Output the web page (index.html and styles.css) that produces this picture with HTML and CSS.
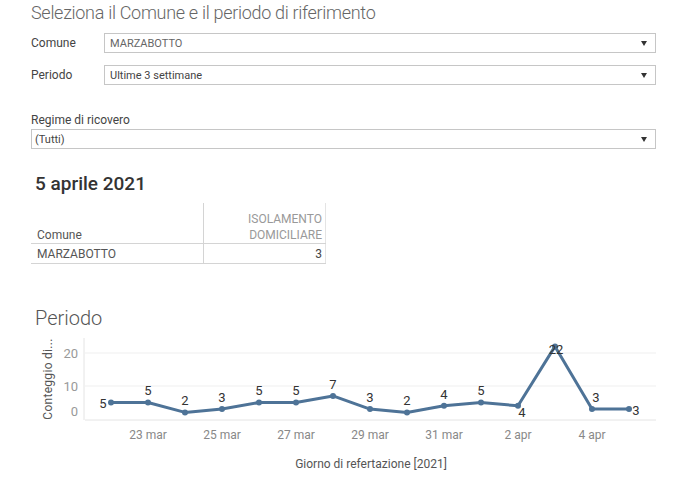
FILE: index.html
```html
<!DOCTYPE html>
<html lang="it">

<head>
  <meta charset="UTF-8" />
  <meta name="viewport" content="width=device-width, initial-scale=1.0" />
  <title>Periodo di riferimento</title>
  <link rel="stylesheet" href="styles.css">
</head>

<body>
  <div class="top">
    <h1 class="title">Seleziona il Comune e il periodo di riferimento</h1>

    <div class="filter-row">
      <span class="filter-label">Comune</span>
      <div class="select"><span class="select-value">MARZABOTTO</span><span class="arrow"></span></div>
    </div>
    <div class="filter-row">
      <span class="filter-label">Periodo</span>
      <div class="select"><span>Ultime 3 settimane</span><span class="arrow"></span></div>
    </div>

    <div class="filter-block">
      <div class="block-label">Regime di ricovero</div>
      <div class="select"><span>(Tutti)</span><span class="arrow"></span></div>
    </div>

    <h2 class="date">5 aprile 2021</h2>

    <table class="summary">
      <thead>
        <tr>
          <th class="col-name">Comune</th>
          <th class="col-value">ISOLAMENTO<br>DOMICILIARE</th>
        </tr>
      </thead>
      <tbody>
        <tr>
          <td class="col-name">MARZABOTTO</td>
          <td class="col-value">3</td>
        </tr>
      </tbody>
    </table>

    <h2 class="chart-title">Periodo</h2>
  </div>

  <svg class="chart" width="682" height="142" viewBox="0 336 682 142">
    <!-- grid -->
    <line class="grid" x1="85" y1="355" x2="656" y2="355" />
    <line class="grid" x1="85" y1="388" x2="656" y2="388" />
    <line class="axis" x1="85" y1="422" x2="656" y2="422" />
    <line class="axis" x1="84" y1="340" x2="84" y2="422" />

    <text class="y-title" transform="translate(48 381) rotate(-90)">Conteggio di...</text>
    <text class="tick" x="78" y="355">20</text>
    <text class="tick" x="78" y="388">10</text>
    <text class="tick" x="78" y="413">0</text>

    <polyline class="line" points="111,404.5 148,404.5 185,414.4 222,411.1 259,404.5 296,404.5 333,397.9 370,411.1 407,414.4 444,407.8 481,404.5 518,407.8 555,348.4 592,411.1 629,411.1" />
    <g class="dots">
      <circle cx="111" cy="404.5" r="3" />
      <circle cx="148" cy="404.5" r="3" />
      <circle cx="185" cy="414.4" r="3" />
      <circle cx="222" cy="411.1" r="3" />
      <circle cx="259" cy="404.5" r="3" />
      <circle cx="296" cy="404.5" r="3" />
      <circle cx="333" cy="397.9" r="3" />
      <circle cx="370" cy="411.1" r="3" />
      <circle cx="407" cy="414.4" r="3" />
      <circle cx="444" cy="407.8" r="3" />
      <circle cx="481" cy="404.5" r="3" />
      <circle cx="518" cy="407.8" r="3" />
      <circle cx="555" cy="348.4" r="3" />
      <circle cx="592" cy="411.1" r="3" />
      <circle cx="629" cy="411.1" r="3" />
    </g>
    <g class="labels">
      <text x="103" y="405">5</text>
      <text x="148" y="392.5">5</text>
      <text x="185" y="402">2</text>
      <text x="222" y="399">3</text>
      <text x="259" y="392.5">5</text>
      <text x="296" y="392.5">5</text>
      <text x="333" y="386">7</text>
      <text x="370" y="399">3</text>
      <text x="407" y="402">2</text>
      <text x="444" y="396">4</text>
      <text x="481" y="392.5">5</text>
      <text x="522" y="414">4</text>
      <text x="556" y="351">22</text>
      <text x="596" y="399">3</text>
      <text x="636" y="412">3</text>
    </g>

    <g class="x-ticks">
      <text x="148" y="437">23 mar</text>
      <text x="222" y="437">25 mar</text>
      <text x="296" y="437">27 mar</text>
      <text x="370" y="437">29 mar</text>
      <text x="444" y="437">31 mar</text>
      <text x="518" y="437">2 apr</text>
      <text x="592" y="437">4 apr</text>
    </g>
    <text class="x-title" x="371" y="466">Giorno di refertazione [2021]</text>
  </svg>
</body>

</html>
```

FILE: styles.css
```css
body {
  font-family: Roboto, "Open Sans", sans-serif;
  background-color: #fff;
  color: #444;
  margin: 0;
  padding: 0;
}

.top {
  padding: 0 26px 0 31px;
}

.title {
  margin: 2px 0 9px 0;
  font-size: 18px;
  line-height: 22px;
  font-weight: 300;
  letter-spacing: -0.3px;
  color: #666;
}

.filter-row {
  display: flex;
  align-items: center;
  margin-bottom: 12px;
}

.filter-label {
  width: 73px;
  font-size: 12px;
  color: #444;
}

.select {
  flex: 1;
  height: 18px;
  border: 1px solid #c6c6c6;
  display: flex;
  align-items: center;
  justify-content: space-between;
  padding: 0 8px 0 5px;
  font-size: 11px;
  color: #444;
}

.select-value {
  color: #666;
}

.arrow {
  width: 0;
  height: 0;
  border-left: 3px solid transparent;
  border-right: 3px solid transparent;
  border-top: 5px solid #333;
}

.filter-block {
  margin-top: 28px;
}

.block-label {
  font-size: 12px;
  line-height: 14px;
  margin-bottom: 2px;
  color: #444;
}

.filter-block .select {
  padding-left: 3px;
}

.date {
  margin: 24px 0 8px 4px;
  font-size: 19px;
  line-height: 22px;
  font-weight: 500;
  color: #333;
}

.summary {
  border-collapse: collapse;
  width: 295px;
  font-size: 12px;
}

.summary th {
  height: 40px;
  vertical-align: bottom;
  font-weight: 400;
  line-height: 16px;
  padding: 0 3px 0 6px;
  border-bottom: 1px solid #d4d4d4;
}

.summary td {
  height: 19px;
  padding: 0 3px 0 6px;
  border-bottom: 1px solid #d4d4d4;
  color: #444;
}

.summary .col-name {
  width: 163px;
  text-align: left;
  color: #555;
}

.summary .col-value {
  text-align: right;
  border-left: 1px solid #d4d4d4;
  border-right: 1px solid #e4e4e4;
}

.summary th.col-value {
  color: #999;
}

.chart-title {
  margin: 42px 0 4px 4px;
  font-size: 20px;
  line-height: 24px;
  font-weight: 300;
  color: #555;
}

.chart {
  display: block;
  font-family: Roboto, "Open Sans", sans-serif;
}

.grid {
  stroke: #efefef;
  stroke-width: 1;
}

.axis {
  stroke: #e4e4e4;
  stroke-width: 1;
}

.y-title {
  font-size: 12px;
  fill: #555;
  text-anchor: middle;
  dominant-baseline: central;
  letter-spacing: 0.3px;
}

.tick {
  font-size: 13px;
  fill: #999;
  text-anchor: end;
  dominant-baseline: central;
}

.line {
  fill: none;
  stroke: #4e7397;
  stroke-width: 3;
  stroke-linejoin: round;
}

.dots circle {
  fill: #4e7397;
}

.labels text {
  font-size: 13px;
  fill: #333;
  text-anchor: middle;
  dominant-baseline: central;
}

.x-ticks text {
  font-size: 12px;
  fill: #888;
  text-anchor: middle;
  dominant-baseline: central;
}

.x-title {
  font-size: 12px;
  fill: #555;
  text-anchor: middle;
  dominant-baseline: central;
}
```
